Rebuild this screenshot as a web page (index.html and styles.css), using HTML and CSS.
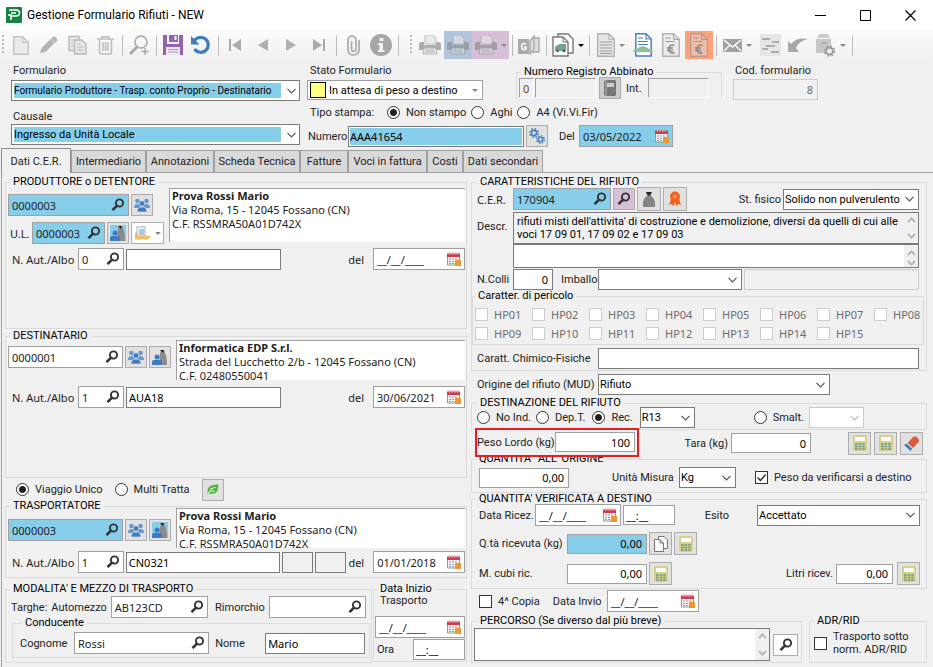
FILE: index.html
```html
<!DOCTYPE html>
<html lang="it">
<head>
  <meta charset="UTF-8">
  <meta name="viewport" content="width=device-width, initial-scale=1.0">
  <title>Gestione Formulario Rifiuti - NEW</title>
  <link rel="stylesheet" href="styles.css">
</head>
<body>
  <svg class="sprite" aria-hidden="true">
    <symbol id="lens" viewBox="0 0 14 14"><circle cx="8.5" cy="5" r="3.6" fill="none" stroke="#333" stroke-width="1.9"/><path d="M5.8 7.8L1.5 12.2" stroke="#333" stroke-width="2.6"/></symbol>
    <symbol id="calendar" viewBox="0 0 14 14"><path d="M.5 3h12v10H.5z" fill="#f4f4f4" stroke="#999"/><path d="M0 1.5h13V5H0z" fill="#d03a4c"/><path d="M2.5 0v3M5.2 0v3M7.9 0v3M10.6 0v3" stroke="#e9a3ab"/><path d="M2 7h9M2 9.5h9M2 11.5h9" stroke="#999" stroke-dasharray="2 1"/><path d="M8 8h6v6H8z" fill="#f39530"/></symbol>
    <symbol id="people" viewBox="0 0 16 14"><g fill="#6a97cd"><circle cx="3.5" cy="3" r="2.3"/><circle cx="12.5" cy="3" r="2.3"/><path d="M0 10q0-4 3.5-4T7 10zM9 10q0-4 3.5-4T16 10z"/></g><g fill="#3f7bc0" stroke="#e1e1e1" stroke-width=".7"><circle cx="8" cy="5.5" r="2.8"/><path d="M3 14q0-5 5-5t5 5z"/></g></symbol>
    <symbol id="binman" viewBox="0 0 16 16"><path d="M8 16q-1-8 0-11l1-4h3l1 3q2 3 2 12z" fill="#8b8b8b"/><path d="M8 1l3 3 1-3z" fill="#222"/><circle cx="5" cy="8" r="2.5" fill="#3f7bc0"/><path d="M0 16v-3q0-2 2-2h6q2 0 2 2v3z" fill="#3f7bc0"/></symbol>
    <symbol id="bag" viewBox="0 0 14 16"><path d="M1 16Q0 8 5 5L4 1h6L9 5q5 3 4 11z" fill="#858585"/><path d="M4 1h6L8 3.5 7 5 5.5 3.5z" fill="#222"/></symbol>
    <symbol id="rosette" viewBox="0 0 12 16"><path d="M2 8L0 14l3-1 1.5 2.5L6 11l1.5 4.5L9 13l3 1-2-6z" fill="#e8622a"/><circle cx="6" cy="5.5" r="5" fill="#f0641e"/><circle cx="6" cy="5.5" r="2" fill="#f58a55"/></symbol>
    <symbol id="folder" viewBox="0 0 16 14"><path d="M2 1h8v9H2z" fill="#fff" stroke="#8fb0d6"/><path d="M4 3h5v6H4z" fill="#a9c6e6"/><path d="M0 13V7h3v3h13l-3 3.5H0z" fill="#f0bf62"/></symbol>
    <symbol id="calc" viewBox="0 0 14 16"><rect width="14" height="16" rx="2" fill="#d8d08a"/><path d="M2 2h10v4H2z" fill="#fff"/><path d="M2 9h10M2 11.5h10M2 14h10" stroke="#5f9b8c" stroke-width="1.6" stroke-dasharray="2.6 1"/></symbol>
    <symbol id="eraser" viewBox="0 0 16 16"><path d="M9.5 1.5h3l2.5 3v2L9 13 3.5 8z" fill="#d9603f"/><path d="M3 8.5l5.5 5-2 2.5L0 10z" fill="#3f7bc0"/><path d="M3 8.5l5.5 5" stroke="#eee"/></symbol>
    <symbol id="leaf" viewBox="0 0 14 12"><path d="M1 12Q-1 3 6 1l7-1q1 11-7 11H3z" fill="#4fb53c"/><path d="M1 12Q4 5 10 3M5 7V4M5 8h4" fill="none" stroke="#e8f7e0" stroke-width="1.2"/></symbol>
    <symbol id="gears" viewBox="0 0 16 16"><g fill="none" stroke="#4a82bd"><circle cx="5" cy="5" r="2.6" stroke-width="1.6"/><circle cx="5" cy="5" r="4.2" stroke-width="1.6" stroke-dasharray="1.7 1.6"/><circle cx="11.5" cy="11.5" r="2.2" stroke-width="1.5"/><circle cx="11.5" cy="11.5" r="3.7" stroke-width="1.5" stroke-dasharray="1.5 1.4"/></g></symbol>
    <symbol id="sheets" viewBox="0 0 14 16"><path d="M4.5.5H10L13.5 4v8.5h-9z" fill="#f8f8f8" stroke="#777"/><path d="M.5 3.5H6L9.5 7v8.5h-9z" fill="#f8f8f8" stroke="#777"/><path d="M6 3.5V7h3.5" fill="none" stroke="#777"/></symbol>
    <symbol id="register" viewBox="0 0 14 16"><rect x="1" width="12" height="16" rx="1.5" fill="#777"/><path d="M4 3h7v4H4z" fill="#ccc"/><path d="M3 0v16" stroke="#bbb"/></symbol>
    <symbol id="printer" viewBox="0 0 22 20"><path d="M6 0h8l3 3v6H6z" fill="#e3e3e3" stroke="#aaa"/><path d="M0 9q0-2 2-2h3v3h12V7h3q2 0 2 2v6H0z" fill="#909090"/><path d="M5 13h12l1 6H4z" fill="#e6e6e6" stroke="#999"/><path d="M6 15h9M6 17h10" stroke="#999"/></symbol>
    <symbol id="euro" viewBox="0 0 18 24"><path d="M.7.7h11l5.6 5.6v17H.7z" fill="#ddd" fill-opacity=".45" stroke="#999" stroke-opacity=".7" stroke-width="1.4"/><path d="M11.7.7v5.6h5.6M3.5 5h5M3.5 8.5h9" fill="none" stroke="#999"/><path d="M12.5 12.5q-5-2-5.5 3.5.5 5.5 5.5 3.5M5 15h6M5 17.5h6" fill="none" stroke="#888" stroke-width="1.4"/></symbol>
  </svg>

  <header class="titlebar">
    <svg width="16" height="16" viewBox="0 0 16 16"><rect width="16" height="16" rx="1" fill="#168344"/><path d="M4 4V3h6q3.5 0 3.5 3T10 9H5v4M2 8h3v5M5 6h5" fill="none" stroke="#fff" stroke-width="1.5"/></svg>
    <h1>Gestione Formulario Rifiuti - NEW</h1>
    <button class="win" aria-label="Riduci"><svg width="11" height="11"><path d="M0 5.5h11" stroke="#000"/></svg></button>
    <button class="win" aria-label="Ingrandisci"><svg width="11" height="11"><path d="M.5.5h10v10H.5z" fill="none" stroke="#000"/></svg></button>
    <button class="win" aria-label="Chiudi"><svg width="11" height="11"><path d="M.5.5l10 10M10.5.5l-10 10" stroke="#000" stroke-width="1.2"/></svg></button>
  </header>

  <nav class="toolbar" aria-label="Comandi">
    <i class="grip"></i>
    <button class="tool" aria-label="Nuovo"><svg width="16" height="19"><path d="M.7.7h9l5.6 5.6v12H.7z" fill="#e9e9e9" stroke="#c4c4c4" stroke-width="1.4"/><path d="M9.7.7v5.6h5.6" fill="none" stroke="#c4c4c4"/></svg></button>
    <button class="tool" aria-label="Modifica"><svg width="18" height="18"><path d="M0 17l1.5-5L11 2.5l4 4L5.5 16zM12 1.5Q14-.5 16 1.5t1 3.5l-1.5 1.5-4-4z" fill="#b4b4b4"/></svg></button>
    <button class="tool" aria-label="Copia"><svg width="19" height="20"><path d="M1 1.5h10v14H1z" fill="#e8e8e8" stroke="#bbb" stroke-width="1.5"/><path d="M6.5 5h7L18 9v10H6.5z" fill="#e8e8e8" stroke="#bbb" stroke-width="1.5"/><path d="M3 5h3M3 8h2M3 11h2M9 9h4M9 12h7M9 15h7" stroke="#bbb"/></svg></button>
    <button class="tool" aria-label="Elimina"><svg width="17" height="19"><path d="M0 3h17M5 3V.7h7V3M2.5 4v12q0 2 2 2h8q2 0 2-2V4M6 6v9M8.5 6v9M11 6v9" fill="none" stroke="#bcbcbc" stroke-width="1.5"/></svg></button>
    <i class="sep"></i>
    <button class="tool" aria-label="Cerca"><svg width="20" height="21"><circle cx="12" cy="7" r="6" fill="none" stroke="#a8a8a8" stroke-width="1.5"/><path d="M8 12l-7 7" stroke="#a8a8a8" stroke-width="3"/><path d="M16 13v7M12.5 16.5h7" stroke="#a8a8a8" stroke-width="1.4"/></svg></button>
    <i class="sep"></i>
    <button class="tool" aria-label="Salva"><svg width="20" height="20"><path d="M0 0h4v9h12V0h4v20H0z" fill="#9263af"/><path d="M6 0h9v7H6z" fill="#9263af"/><path d="M11.5 1h2v4h-2z" fill="#fff"/><path d="M3 12h14v8H3z" fill="#eee4f2"/><path d="M5 14.5h10M5 17h10" stroke="#aaa"/></svg></button>
    <button class="tool" aria-label="Aggiorna"><svg width="20" height="20"><path d="M3 6.5A7.5 7.5 0 1 1 3.5 14" fill="none" stroke="#3f7dbb" stroke-width="3.2"/><path d="M0 1v8.5h8.5z" fill="#3f7dbb"/></svg></button>
    <i class="sep"></i>
    <button class="tool" aria-label="Primo"><svg width="12" height="12"><path d="M12 0v12L3 6zM0 0h2v12H0z" fill="#aaa"/></svg></button>
    <button class="tool" aria-label="Precedente"><svg width="10" height="12"><path d="M10 0v12L0 6z" fill="#b0b0b0"/></svg></button>
    <button class="tool" aria-label="Successivo"><svg width="10" height="12"><path d="M0 0v12l10-6z" fill="#b0b0b0"/></svg></button>
    <button class="tool" aria-label="Ultimo"><svg width="12" height="12"><path d="M0 0v12l9-6zM10 0h2v12h-2z" fill="#aaa"/></svg></button>
    <i class="sep"></i>
    <button class="tool" aria-label="Allegati"><svg width="13" height="21"><path d="M12 5v10q-.5 5-5.5 5T1 15V5q.3-4 4-4t4 4v9q-.2 2.5-2.2 2.5T4.6 14V6" fill="none" stroke="#aaa" stroke-width="1.7"/></svg></button>
    <button class="tool" aria-label="Informazioni"><svg width="22" height="22"><circle cx="11" cy="11" r="11" fill="#a6a6a6"/><path d="M9.5 4h4v3h-4zM8 9h5v7h1.5v2H8v-2h1.5v-5H8z" fill="#f4f4f4"/></svg></button>
    <i class="sep"></i>
    <i class="grip second"></i>
    <button class="tool" aria-label="Stampa"><svg class="faded" width="22" height="20"><use href="#printer"/></svg></button>
    <button class="tool blue-cell" aria-label="Stampa copia"><svg class="faded" width="22" height="20"><use href="#printer"/></svg></button>
    <button class="tool drop pink-cell" aria-label="Altre stampe"><svg class="faded" width="22" height="20"><use href="#printer"/></svg><b class="arrow"></b></button>
    <i class="sep"></i>
    <button class="tool" aria-label="Registro"><svg width="22" height="20"><path d="M0 4h11v15H0z" fill="#aaa"/><path d="M8 9q-4-2-4.5 2.5Q4 16 8 14v-2H6" fill="none" stroke="#fff" stroke-width="1.5"/><path d="M12 6l4-5v13l-4 5zM16 3h5v14h-8" fill="#ddd" stroke="#aaa" stroke-width="1.4"/></svg></button>
    <i class="sep"></i>
    <button class="tool drop" aria-label="Documenti"><svg width="22" height="24"><path d="M6 1h10l5 5v14H6z" fill="#fff" stroke="#777" stroke-width="1.4"/><path d="M1 4h10l5 5v14H1z" fill="#fff" stroke="#777" stroke-width="1.4"/><path d="M11 4v5h5" fill="none" stroke="#777"/><path d="M3 14l2-2h2v-1h7v7H3z" fill="#6fa58a"/><circle cx="5.5" cy="18" r="1.3" fill="#456"/><circle cx="12" cy="18" r="1.3" fill="#456"/></svg><b class="arrow dark"></b></button>
    <i class="sep"></i>
    <button class="tool drop" aria-label="Elenco"><svg width="18" height="24"><path d="M.7.7h11l5.6 5.6v17H.7z" fill="#e6e6e6" stroke="#b0b0b0" stroke-width="1.4"/><path d="M11.7.7v5.6h5.6" fill="none" stroke="#b0b0b0"/><path d="M3 9h12M3 12h12M3 15h12M3 18h12M3 20.5h12" stroke="#999"/></svg><b class="arrow"></b></button>
    <button class="tool" aria-label="Documento veicolo"><svg width="20" height="24"><path d="M2.8.8H13l5.2 5.2v17H2.8z" fill="#fafafa" stroke="#4a82bd" stroke-width="1.5"/><path d="M13 .8V6h5.2M5 5h5M5 8.5h10M5 11.5h10" fill="none" stroke="#4a82bd" stroke-width="1.2"/><path d="M0 18q1-2 4-2 4-4 9-2l3 2q4 0 4 3H1z" fill="#8fbf95"/></svg></button>
    <button class="tool" aria-label="Fattura"><svg width="18" height="24"><use href="#euro"/></svg></button>
    <button class="tool orange-cell" aria-label="Annulla fattura"><svg width="18" height="24"><use href="#euro"/></svg></button>
    <i class="sep"></i>
    <button class="tool drop" aria-label="Posta"><svg width="19" height="13"><path d="M0 0h19v13H0z" fill="#a0a0a0"/><path d="M1 1l8.5 7L18 1M1 12l6-6M18 12l-6-6" fill="none" stroke="#fff" stroke-width="1.4"/></svg><b class="arrow"></b></button>
    <button class="tool" aria-label="Dettaglio"><svg width="22" height="22"><path d="M1 0h21v22H1z" fill="#e6e6e6"/><path d="M3 5h8M13 8h7M7 12h9M3 15h6M12 18h8" stroke="#999" stroke-width="1.3"/></svg></button>
    <button class="tool" aria-label="Indietro"><svg width="20" height="14"><path d="M0 14V3l3 3Q9-1 20 1 11 3 8 10l3 4z" fill="#a8a8a8"/></svg></button>
    <button class="tool drop" aria-label="Impostazioni"><svg width="20" height="23"><path d="M3 0h9l2 4H1z" fill="#ccc"/><path d="M0 5h15v14H0z" fill="#c6c6c6"/><path d="M5 9h6" stroke="#999"/><circle cx="13.5" cy="17" r="3.4" fill="#eee" stroke="#999" stroke-width="1.8"/><circle cx="13.5" cy="17" r="5" fill="none" stroke="#999" stroke-width="1.5" stroke-dasharray="2 1.9"/></svg><b class="arrow"></b></button>
    <i class="sep"></i>
  </nav>

  <section class="head">
    <div class="kind">
      <label for="formulario">Formulario</label>
      <select id="formulario" class="hot long-text"><option>Formulario Produttore - Trasp. conto Proprio - Destinatario</option></select>
      <label for="causale" class="second-label">Causale</label>
      <select id="causale" class="hot"><option>Ingresso da Unità Locale</option></select>
    </div>
    <div class="status">
      <div class="row">
        <div class="state">
          <label for="stato">Stato Formulario</label>
          <div class="state-box"><i class="swatch"></i><select id="stato"><option>In attesa di peso a destino</option></select></div>
        </div>
        <fieldset class="register">
          <legend>Numero Registro Abbinato</legend>
          <div class="row">
            <input class="sunk zero" value="0" aria-label="Numero registro" readonly>
            <input class="sunk reg" aria-label="Registro abbinato" disabled>
            <button class="btn gray" aria-label="Apri registro"><svg width="14" height="16"><use href="#register"/></svg></button>
            <label for="int">Int.</label>
            <input id="int" class="sunk int" disabled>
          </div>
        </fieldset>
        <div class="code">
          <label for="cod">Cod. formulario</label>
          <input id="cod" class="box num" value="8" disabled>
        </div>
      </div>
      <div class="row print-kind">
        <span class="caption">Tipo stampa:</span>
        <label class="pick"><input type="radio" name="stampa" checked>Non stampo</label>
        <label class="pick"><input type="radio" name="stampa">Aghi</label>
        <label class="pick"><input type="radio" name="stampa">A4 (Vi.Vi.Fir)</label>
      </div>
      <div class="row number-row">
        <label for="numero">Numero</label>
        <input id="numero" class="box hot-box" value="AAA41654">
        <button class="btn" aria-label="Genera numero"><svg width="16" height="16"><use href="#gears"/></svg></button>
        <label for="data" class="of">Del</label>
        <span class="field date blue"><input id="data" value="03/05/2022"><button aria-label="Calendario"><svg width="14" height="14"><use href="#calendar"/></svg></button></span>
      </div>
    </div>
  </section>

  <div class="tabs" role="tablist">
    <button role="tab" class="tab active" aria-selected="true">Dati C.E.R.</button>
    <button role="tab" class="tab t2">Intermediario</button>
    <button role="tab" class="tab t3">Annotazioni</button>
    <button role="tab" class="tab t4">Scheda Tecnica</button>
    <button role="tab" class="tab t5">Fatture</button>
    <button role="tab" class="tab t6">Voci in fattura</button>
    <button role="tab" class="tab t7">Costi</button>
    <button role="tab" class="tab t8">Dati secondari</button>
  </div>

  <main class="panel">
    <div class="left">
      <fieldset class="party producer">
        <legend>PRODUTTORE o DETENTORE</legend>
        <div class="top">
          <div class="keys">
            <div class="row">
              <span class="field blue code-wide"><input value="0000003" aria-label="Produttore"><button aria-label="Cerca produttore"><svg width="14" height="14"><use href="#lens"/></svg></button></span>
              <button class="btn" aria-label="Anagrafica"><svg width="16" height="14"><use href="#people"/></svg></button>
            </div>
            <div class="row unit">
              <label for="ul" class="wide">U.L.</label>
              <span class="field blue code-short"><input id="ul" value="0000003"><button aria-label="Cerca unità"><svg width="14" height="14"><use href="#lens"/></svg></button></span>
              <button class="btn" aria-label="Trasportatori"><svg class="sky" width="16" height="16"><use href="#binman"/></svg></button>
              <button class="btn white" aria-label="Apri cartella"><svg width="16" height="14"><use href="#folder"/></svg><b class="arrow"></b></button>
            </div>
          </div>
          <div class="info"><strong>Prova Rossi Mario</strong><br>Via Roma, 15 - 12045 Fossano (CN)<br>C.F. RSSMRA50A01D742X</div>
        </div>
        <div class="row permit">
          <label for="aut1" class="wide">N. Aut./Albo</label>
          <span class="field seq"><input id="aut1" value="0"><button aria-label="Cerca autorizzazione"><svg width="14" height="14"><use href="#lens"/></svg></button></span>
          <input class="box albo" aria-label="Autorizzazione">
          <label for="del1" class="wide del">del</label>
          <span class="field date"><input id="del1" value="__/__/____"><button aria-label="Calendario"><svg width="14" height="14"><use href="#calendar"/></svg></button></span>
        </div>
      </fieldset>

      <fieldset class="party receiver">
        <legend>DESTINATARIO</legend>
        <div class="top">
          <div class="keys">
            <div class="row">
              <span class="field code-mid"><input value="0000001" aria-label="Destinatario"><button aria-label="Cerca destinatario"><svg width="14" height="14"><use href="#lens"/></svg></button></span>
              <button class="btn" aria-label="Anagrafica"><svg width="16" height="14"><use href="#people"/></svg></button>
              <button class="btn" aria-label="Trasportatori"><svg width="16" height="16"><use href="#binman"/></svg></button>
            </div>
          </div>
          <div class="info"><strong>Informatica EDP S.r.l.</strong><br>Strada del Lucchetto 2/b - 12045 Fossano (CN)<br>C.F. 02480550041</div>
        </div>
        <div class="row permit">
          <label for="aut2" class="wide">N. Aut./Albo</label>
          <span class="field seq"><input id="aut2" value="1"><button aria-label="Cerca autorizzazione"><svg width="14" height="14"><use href="#lens"/></svg></button></span>
          <input class="box albo" value="AUA18" aria-label="Autorizzazione">
          <label for="del2" class="wide del">del</label>
          <span class="field date"><input id="del2" value="30/06/2021"><button aria-label="Calendario"><svg width="14" height="14"><use href="#calendar"/></svg></button></span>
        </div>
      </fieldset>

      <div class="row trip">
        <label class="pick"><input type="radio" name="viaggio" checked>Viaggio Unico</label>
        <label class="pick"><input type="radio" name="viaggio">Multi Tratta</label>
        <button class="btn" aria-label="Ambiente"><svg width="12" height="11"><use href="#leaf"/></svg></button>
      </div>

      <fieldset class="party carrier">
        <legend>TRASPORTATORE</legend>
        <div class="top">
          <div class="keys">
            <div class="row">
              <span class="field blue code-mid"><input value="0000003" aria-label="Trasportatore"><button aria-label="Cerca trasportatore"><svg width="14" height="14"><use href="#lens"/></svg></button></span>
              <button class="btn" aria-label="Anagrafica"><svg width="16" height="14"><use href="#people"/></svg></button>
              <button class="btn" aria-label="Trasportatori"><svg class="sky" width="16" height="16"><use href="#binman"/></svg></button>
            </div>
          </div>
          <div class="info"><strong>Prova Rossi Mario</strong><br>Via Roma, 15 - 12045 Fossano (CN)<br>C.F. RSSMRA50A01D742X</div>
        </div>
        <div class="row permit">
          <label for="aut3" class="wide">N. Aut./Albo</label>
          <span class="field seq"><input id="aut3" value="1"><button aria-label="Cerca autorizzazione"><svg width="14" height="14"><use href="#lens"/></svg></button></span>
          <input class="box albo" value="CN0321" aria-label="Autorizzazione">
          <input class="box tiny" aria-label="Categoria" readonly>
          <input class="box tiny" aria-label="Classe" readonly>
          <label for="del3" class="wide del">del</label>
          <span class="field date"><input id="del3" value="01/01/2018"><button aria-label="Calendario"><svg width="14" height="14"><use href="#calendar"/></svg></button></span>
        </div>
      </fieldset>

      <div class="vehicle">
        <fieldset class="mode">
          <legend>MODALITA' E MEZZO DI TRASPORTO</legend>
          <div class="row plates">
            <span>Targhe:</span>
            <label for="automezzo">Automezzo</label>
            <span class="field plate"><input id="automezzo" value="AB123CD"><button aria-label="Cerca automezzo"><svg width="14" height="14"><use href="#lens"/></svg></button></span>
            <label for="rimorchio" class="trailer">Rimorchio</label>
            <span class="field plate"><input id="rimorchio"><button aria-label="Cerca rimorchio"><svg width="14" height="14"><use href="#lens"/></svg></button></span>
          </div>
          <fieldset class="driver">
            <legend>Conducente</legend>
            <div class="row">
              <label for="cognome">Cognome</label>
              <span class="field surname"><input id="cognome" value="Rossi"><button aria-label="Cerca conducente"><svg width="14" height="14"><use href="#lens"/></svg></button></span>
              <label for="nome" class="second-name">Nome</label>
              <input id="nome" class="box name" value="Mario">
            </div>
          </fieldset>
        </fieldset>
        <fieldset class="start">
          <legend>Data Inizio</legend>
          <label for="inizio">Trasporto</label>
          <span class="field date"><input id="inizio" value="__/__/____"><button aria-label="Calendario"><svg width="14" height="14"><use href="#calendar"/></svg></button></span>
          <div class="row"><label for="ora">Ora</label><input id="ora" class="box light hour" value="__:__"></div>
        </fieldset>
      </div>
    </div>

    <div class="right">
      <fieldset class="waste">
        <legend>CARATTERISTICHE DEL RIFIUTO</legend>
        <div class="row cer">
          <label for="cer" class="wide lead">C.E.R.</label>
          <span class="field blue cer-code"><input id="cer" value="170904"><button aria-label="Cerca CER"><svg width="14" height="14"><use href="#lens"/></svg></button></span>
          <button class="btn pink" aria-label="Cerca"><svg width="14" height="14"><use href="#lens"/></svg></button>
          <button class="btn tall" aria-label="Rifiuto"><svg width="14" height="16"><use href="#bag"/></svg></button>
          <button class="btn tall" aria-label="Certificato"><svg width="12" height="16"><use href="#rosette"/></svg></button>
          <label for="fisico" class="push">St. fisico</label>
          <select id="fisico" class="physical"><option>Solido non pulverulento</option></select>
        </div>
        <div class="row descr">
          <label for="descr" class="lead">Descr.</label>
          <div class="memos">
            <div class="memo"><textarea id="descr" readonly>rifiuti misti dell'attivita' di costruzione e demolizione, diversi da quelli di cui alle voci 17 09 01, 17 09 02 e 17 09 03</textarea><span class="bar"></span></div>
            <div class="memo low"><textarea aria-label="Note"></textarea><span class="bar"></span></div>
          </div>
        </div>
        <div class="row packs">
          <label for="colli" class="lead">N.Colli</label>
          <input id="colli" class="box num count" value="0">
          <label for="imballo">Imballo</label>
          <select id="imballo" class="pack"><option></option></select>
          <input class="box grow" aria-label="Descrizione imballo" disabled>
        </div>
        <fieldset class="hazard" disabled>
          <legend>Caratter. di pericolo</legend>
          <div class="hp wide">
            <label><input type="checkbox">HP01</label><label><input type="checkbox">HP02</label><label><input type="checkbox">HP03</label><label><input type="checkbox">HP04</label><label><input type="checkbox">HP05</label><label><input type="checkbox">HP06</label><label><input type="checkbox">HP07</label><label><input type="checkbox">HP08</label>
            <label><input type="checkbox">HP09</label><label><input type="checkbox">HP10</label><label><input type="checkbox">HP11</label><label><input type="checkbox">HP12</label><label><input type="checkbox">HP13</label><label><input type="checkbox">HP14</label><label><input type="checkbox">HP15</label>
          </div>
        </fieldset>
        <div class="row chem">
          <label for="chimico" class="long">Caratt. Chimico-Fisiche</label>
          <input id="chimico" class="box grow">
        </div>
      </fieldset>

      <div class="row origin">
        <label for="origine" class="long">Origine del rifiuto (MUD)</label>
        <select id="origine"><option>Rifiuto</option></select>
      </div>

      <fieldset class="dest">
        <legend>DESTINAZIONE DEL RIFIUTO</legend>
        <div class="row">
          <label class="pick"><input type="radio" name="dest">No Ind.</label>
          <label class="pick"><input type="radio" name="dest">Dep.T.</label>
          <label class="pick rec"><input type="radio" name="dest" checked>Rec.</label>
          <select class="small" aria-label="Recupero"><option>R13</option></select>
          <label class="pick push"><input type="radio" name="dest">Smalt.</label>
          <select class="small" aria-label="Smaltimento" disabled><option></option></select>
        </div>
      </fieldset>

      <div class="row weight">
        <div class="row marked">
          <label for="lordo">Peso Lordo (kg)</label>
          <input id="lordo" class="box light num kg" value="100">
        </div>
        <label for="tara" class="push">Tara (kg)</label>
        <input id="tara" class="box light num kg" value="0">
        <button class="btn first" aria-label="Calcola lordo"><svg width="14" height="16"><use href="#calc"/></svg></button>
        <button class="btn" aria-label="Calcola tara"><svg width="14" height="16"><use href="#calc"/></svg></button>
        <button class="btn" aria-label="Azzera"><svg width="16" height="16"><use href="#eraser"/></svg></button>
      </div>

      <fieldset class="qty">
        <legend>QUANTITA'&nbsp; ALL' ORIGINE</legend>
        <div class="row">
          <input class="box light num amount" value="0,00" aria-label="Quantità all'origine">
          <label for="um" class="unit-label">Unità Misura</label>
          <select id="um"><option>Kg</option></select>
          <label class="pick"><input type="checkbox" checked>Peso da verificarsi a destino</label>
        </div>
      </fieldset>

      <fieldset class="verified">
        <legend>QUANTITA' VERIFICATA A DESTINO</legend>
        <div class="row arrival">
          <label for="ricez">Data Ricez.</label>
          <span class="field date short"><input id="ricez" value="__/__/____"><button aria-label="Calendario"><svg width="14" height="14"><use href="#calendar"/></svg></button></span>
          <input class="box light hour" value="__:__" aria-label="Ora ricezione">
          <label for="esito" class="push">Esito</label>
          <select id="esito"><option>Accettato</option></select>
        </div>
        <div class="row">
          <label for="qta" class="name-col">Q.tà ricevuta (kg)</label>
          <input id="qta" class="box light num kg blue" value="0,00">
          <button class="btn" aria-label="Copia quantità"><svg width="14" height="16"><use href="#sheets"/></svg></button>
          <button class="btn" aria-label="Calcola"><svg width="14" height="16"><use href="#calc"/></svg></button>
        </div>
        <div class="row cubic">
          <label for="cubi" class="name-col">M. cubi ric.</label>
          <input id="cubi" class="box light num kg" value="0,00">
          <button class="btn" aria-label="Calcola"><svg width="14" height="16"><use href="#calc"/></svg></button>
          <label for="litri" class="push">Litri ricev.</label>
          <input id="litri" class="box light num litres" value="0,00">
          <button class="btn" aria-label="Calcola"><svg width="14" height="16"><use href="#calc"/></svg></button>
        </div>
      </fieldset>

      <div class="row copy">
        <label class="pick"><input type="checkbox">4^ Copia</label>
        <label for="invio">Data Invio</label>
        <span class="field date"><input id="invio" value="__/__/____"><button aria-label="Calendario"><svg width="14" height="14"><use href="#calendar"/></svg></button></span>
      </div>

      <div class="bottom">
        <fieldset class="route">
          <legend>PERCORSO (Se diverso dal più breve)</legend>
          <div class="row">
            <div class="memo"><textarea aria-label="Percorso"></textarea><span class="bar"></span></div>
            <button class="btn white" aria-label="Cerca percorso"><svg width="14" height="14"><use href="#lens"/></svg></button>
          </div>
        </fieldset>
        <fieldset class="adr">
          <legend>ADR/RID</legend>
          <label class="pick"><input type="checkbox"><span>Trasporto sotto<br>norm. ADR/RID</span></label>
        </fieldset>
      </div>
    </div>
  </main>
</body>
</html>
```
FILE: styles.css
```css
:root {
  --face: #f0f0f0;
  --line: #dcdcdc;
  --edge: #7a7a7a;
  --soft: #a0a0a0;
  --sky: #87ceeb;
  --tight: Roboto, sans-serif;
  --open: "Noto Sans", sans-serif;
  --chevron: url("data:image/svg+xml,%3Csvg xmlns='http://www.w3.org/2000/svg' width='9' height='6'%3E%3Cpath d='M.5 .8l4 4 4-4' fill='none' stroke='%23555' stroke-width='1.2'/%3E%3C/svg%3E");
}

* {
  box-sizing: border-box;
}

body {
  margin: 0;
  background: var(--face);
  color: #222;
  font: 11px/13px var(--tight);
}

button,
input,
select,
textarea {
  margin: 0;
  padding: 0;
  border: 0;
  border-radius: 0;
  color: inherit;
  font: inherit;
  min-width: 0;
  outline: 0;
}

input,
.wide {
  font: 11px/13px var(--open);
}

label,
legend,
.caption {
  white-space: nowrap;
}

svg {
  display: block;
  flex: none;
}

.sprite {
  width: 0;
  height: 0;
  position: absolute;
}

.row {
  display: flex;
  align-items: center;
}

.push {
  margin-left: auto;
}

.grow {
  flex: 1;
}

/* title bar */
.titlebar {
  display: flex;
  align-items: center;
  height: 30px;
  padding-left: 6px;
  background: #fff;
}

.titlebar h1 {
  flex: 1;
  margin: 0 0 0 5px;
  color: #000;
  font: 12px/16px var(--tight);
}

.win {
  display: flex;
  justify-content: center;
  width: 45px;
  background: none;
}

/* toolbar */
.toolbar {
  display: flex;
  align-items: center;
  height: 30px;
  padding-left: 2px;
  background: linear-gradient(#fcfcfc, #f0f0f0);
}

.tool {
  display: flex;
  align-items: center;
  justify-content: center;
  width: 28px;
  height: 28px;
  background: none;
}

.drop {
  width: 37px;
  gap: 4px;
}

.faded {
  opacity: .7;
}

.blue-cell {
  background: #b0c4de;
}

.pink-cell {
  background: #d8bfd8;
}

.orange-cell {
  background: #ffa07a;
}

.arrow {
  border: 3px solid transparent;
  border-top-color: #888;
  border-bottom: 0;
}

.arrow.dark {
  border-top-color: #000;
}

.sep {
  width: 6px;
  height: 21px;
  background: linear-gradient(#bdbdbd, #bdbdbd) 3px 0 / 1px 100% no-repeat;
}

.grip {
  width: 2px;
  height: 20px;
  margin-right: 3px;
  background: repeating-linear-gradient(#bbb 0 2px, transparent 2px 4px);
}

.grip.second {
  margin: 0 4px 0 9px;
}

/* controls */
.box {
  height: 21px;
  padding: 0 4px 0 2px;
  border: 1px solid var(--edge);
  background: #fff;
  color: #000;
}

.box.light {
  border-color: var(--soft);
}

.box:disabled {
  border-color: #ccc;
  background: var(--face);
  color: #6d6d6d;
}

.num {
  text-align: right;
}

.field {
  display: flex;
  align-items: center;
  height: 22px;
  padding: 0 3px;
  border: 1px solid var(--soft);
  background: #fff;
}

.field input {
  flex: 1;
  width: 0;
  background: none;
}

.field button {
  background: none;
}

.blue,
.box.blue {
  background: var(--sky);
}

.date {
  width: 92px;
}

.btn {
  display: flex;
  flex: none;
  align-items: center;
  justify-content: center;
  width: 22px;
  height: 22px;
  border: 1px solid #adadad;
  background: #e1e1e1;
}

.btn.white {
  background: #fff;
}

.btn.gray {
  background: #ccc;
}

.btn.pink {
  background: #d8bfd8;
}

.sky {
  background: var(--sky);
}

select {
  appearance: none;
  height: 21px;
  padding: 0 15px 0 1px;
  border: 1px solid var(--edge);
  background: var(--chevron) right 4px center no-repeat #fff;
  color: #000;
}

select:disabled {
  border-color: #ccc;
  background-image: url("data:image/svg+xml,%3Csvg xmlns='http://www.w3.org/2000/svg' width='9' height='6'%3E%3Cpath d='M.5 .8l4 4 4-4' fill='none' stroke='%23bbb' stroke-width='1.2'/%3E%3C/svg%3E");
  opacity: 1;
}

select.hot {
  padding: 2px 18px 2px 2px;
  background: var(--chevron) right 4px center no-repeat border-box,
    linear-gradient(var(--sky), var(--sky)) content-box,
    #fff;
}

select.long-text {
  font-size: 10px;
}

input[type="radio"],
input[type="checkbox"] {
  appearance: none;
  flex: none;
  width: 13px;
  height: 13px;
  border: 1px solid #333;
  background: #fff;
}

input[type="radio"] {
  border-radius: 50%;
}

input[type="radio"]:checked {
  background: radial-gradient(#222 0 3px, #fff 4px);
}

input[type="checkbox"]:checked {
  background: url("data:image/svg+xml,%3Csvg xmlns='http://www.w3.org/2000/svg' width='11' height='11'%3E%3Cpath d='M1.5 5.5l3 3 5-6' fill='none' stroke='%23222' stroke-width='1.3'/%3E%3C/svg%3E") #fff;
}

.pick {
  display: flex;
  align-items: center;
  gap: 6px;
}

fieldset {
  min-width: 0;
  margin: 0;
  padding: 0 1px 0 2px;
  border: 1px solid var(--line);
}

legend {
  height: 10px;
  margin-left: 2px;
  padding: 0 3px;
  color: #000;
  line-height: 10px;
}

/* header */
.head {
  display: flex;
  gap: 7px;
  padding: 4px 12px 0 11px;
}

.kind {
  display: flex;
  flex-direction: column;
  width: 289px;
}

.kind label,
.state label,
.code label {
  display: block;
  height: 16px;
  padding-left: 2px;
}

.kind .second-label {
  margin-top: 9px;
  height: 14px;
}

.state {
  width: 176px;
}

.state label {
  padding-left: 3px;
}

.state-box {
  display: flex;
  align-items: center;
  height: 20px;
  border: 1px solid var(--soft);
  background: #fff;
}

.swatch {
  flex: none;
  width: 16px;
  height: 16px;
  margin: 0 3px 0 2px;
  border: 1px solid #000;
  background: #ffff80;
}

.state-box select {
  flex: 1;
  height: 18px;
  padding: 0;
  border: 0;
  background: none;
}

.state-box::after {
  content: "";
  margin-right: 4px;
  border: 3px solid transparent;
  border-top-color: #888;
  border-bottom: 0;
}

.status .row:first-child {
  align-items: flex-start;
}

.register {
  width: 206px;
  margin: 3px 11px 0 33px;
  border-bottom: 0;
}

.register .row:first-child {
  align-items: center;
}

.register label {
  margin: 0 6px 0 5px;
}

.sunk {
  height: 20px;
  padding: 0 3px;
  border: 1px solid var(--soft);
  border-right-color: #fff;
  border-bottom-color: #fff;
  background: var(--face);
  color: #7a3b00;
}

.zero {
  width: 15px;
  margin-right: 1px;
}

.reg {
  width: 61px;
  margin-right: 3px;
}

.int {
  width: 61px;
}

.code label {
  height: 15px;
}

.code .box {
  width: 85px;
}

.print-kind {
  height: 25px;
  padding-left: 3px;
}

.print-kind .caption {
  width: 77px;
}

.print-kind .pick {
  margin-right: 5px;
}

.number-row label {
  width: 40px;
  margin-left: 1px;
}

.number-row .hot-box {
  width: 176px;
  margin-right: 2px;
  padding: 1px;
  background: linear-gradient(var(--sky), var(--sky)) content-box, #fff;
}

.number-row .of {
  width: 20px;
  margin-left: 11px;
}

.number-row .date {
  width: 94px;
}

/* tabs */
.tabs {
  display: flex;
  align-items: flex-end;
  height: 24px;
  margin-top: 1px;
  padding-left: 1px;
}

.tab {
  height: 22px;
  border: 1px solid var(--soft);
  border-bottom: 0;
  background: #d9d9d9;
  white-space: nowrap;
}

.tab.active {
  width: 70px;
  height: 25px;
  margin-bottom: -1px;
  background: var(--face);
  border-color: #8c8c8c;
  z-index: 1;
}

.t2 { width: 75px; }
.t3 { width: 68px; }
.t4 { width: 86px; }
.t5 { width: 48px; }
.t6 { width: 79px; }
.t7 { width: 36px; }
.t8 { width: 80px; }

.panel {
  display: grid;
  grid-template-columns: 462fr 456fr;
  gap: 4px;
  margin-left: 1px;
  padding: 4px 6px 4px 3px;
  border-top: 1px solid var(--soft);
  border-left: 1px solid var(--soft);
}

/* left column */
.left,
.right {
  min-width: 0;
}

.top {
  display: flex;
}

.keys {
  display: flex;
  flex-direction: column;
  gap: 6px;
  margin-right: 5px;
}

.keys .row {
  gap: 2px;
}

.info {
  flex: 1;
  height: 40px;
  padding-left: 2px;
  border: 1px solid var(--soft);
  border-width: 1px 0 0 1px;
  background: #fff;
  overflow: hidden;
  font: 11px/14px var(--open);
  white-space: nowrap;
}

.producer {
  min-height: 152px;
}

.producer .keys {
  padding-top: 7px;
}

.producer .info {
  height: 54px;
  margin-top: 1px;
}

.code-wide {
  width: 121px;
}

.code-mid {
  width: 115px;
}

.code-short {
  width: 73px;
}

.unit label {
  width: 22px;
  padding-left: 2px;
}

.unit .white {
  gap: 4px;
  width: 33px;
}

.permit {
  gap: 2px;
  margin-top: 4px;
}

.permit label:first-child {
  width: 68px;
  padding-left: 4px;
}

.seq {
  width: 46px;
}

.albo {
  width: 155px;
}

.tiny {
  width: 31px;
  background: var(--face);
}

.permit .del {
  margin: 0 7px 0 auto;
}

.receiver {
  min-height: 147px;
  margin-top: 2px;
}

.receiver .keys {
  padding-top: 5px;
}

.receiver .info {
  margin-top: -1px;
}

.receiver .permit {
  margin-top: 6px;
}

.trip {
  height: 23px;
  padding-left: 11px;
}

.trip .pick {
  margin-right: 12px;
}

.carrier .keys {
  padding-top: 8px;
}

.carrier .info {
  margin-top: -3px;
}

.carrier .permit {
  margin: 3px 0 4px;
}

.vehicle {
  display: flex;
  align-items: flex-start;
  margin-top: 6px;
}

.mode {
  flex: 1;
  padding-bottom: 4px;
}

.plates {
  gap: 4px;
  padding: 2px 4px 0 3px;
}

.plates .plate {
  flex: 1;
}

.plates .trailer {
  margin-left: 3px;
}

.driver {
  margin-left: 4px;
  padding: 4px 4px 3px 7px;
}

.surname {
  flex: 137;
}

.name {
  flex: 99;
}

.driver label {
  width: 54px;
}

.driver .second-name {
  width: 50px;
  margin-left: 6px;
}

.start {
  width: 94px;
  margin-left: 1px;
  padding: 0 1px 1px;
}

.start > label {
  display: block;
  height: 22px;
  padding-left: 5px;
}

.start .date {
  width: 90px;
}

.start .row {
  margin-top: 1px;
  justify-content: space-between;
  padding-left: 2px;
}

.hour {
  width: 52px;
}

/* right column */
.right legend {
  margin-left: 0;
}

.waste {
  padding: 0 7px 1px 5px;
}

.lead {
  flex: none;
  width: 36px;
}

.cer {
  gap: 2px;
}

.cer .lead {
  width: 34px;
}

.cer-code {
  width: 98px;
}

.tall {
  width: 24px;
  height: 24px;
}

.physical {
  width: 136px;
}

.descr {
  align-items: flex-start;
  margin-top: 1px;
}

.descr .lead {
  padding-top: 8px;
}

.memos {
  flex: 1;
}

.memo {
  display: flex;
  flex: 1;
  height: 32px;
  border: 1px solid var(--edge);
  background: var(--face);
}

.memo textarea {
  flex: 1;
  height: 100%;
  padding: 2px 0 2px 3px;
  background: #fff;
  resize: none;
  overflow: hidden;
}

.memo textarea[readonly] {
  background: var(--face);
  color: #000;
}

.memo.low {
  height: 24px;
}

.bar {
  width: 14px;
  background: url("data:image/svg+xml,%3Csvg xmlns='http://www.w3.org/2000/svg' width='9' height='6'%3E%3Cpath d='M1 5l3.5-3.5L8 5' fill='none' stroke='%23b8b8b8' stroke-width='2'/%3E%3C/svg%3E") center 4px no-repeat,
    url("data:image/svg+xml,%3Csvg xmlns='http://www.w3.org/2000/svg' width='9' height='6'%3E%3Cpath d='M1 1l3.5 3.5L8 1' fill='none' stroke='%23b8b8b8' stroke-width='2'/%3E%3C/svg%3E") center bottom 4px no-repeat;
}

.low .bar {
  background-position: center 5px, center bottom 1px;
}

.packs {
  margin-top: 1px;
}

.packs .count {
  width: 40px;
}

.packs label:not(.lead) {
  width: 37px;
  margin-left: 8px;
}

.pack {
  width: 144px;
  margin-right: 2px;
}

.hazard {
  margin: 1px -5px 0;
  padding: 7px 1px 4px 2px;
}

.hp {
  display: grid;
  grid-template-columns: repeat(7, 57fr) 48fr;
  row-gap: 6px;
  color: #6d6d6d;
}

.hp label {
  display: flex;
  align-items: center;
  gap: 6px;
}

.hp input {
  border-color: #ccc;
}

.chem {
  margin-top: 3px;
}

.long {
  width: 121px;
}

.origin {
  margin: 3px 0;
  padding-left: 6px;
}

.origin select {
  width: 232px;
}

.dest {
  padding: 0 62px 1px 5px;
}

.dest .row {
  margin-top: -1px;
  gap: 5px;
}

.rec {
  margin: 0 2px;
}

.small {
  width: 55px;
}

.weight {
  position: relative;
  z-index: 1;
  height: 26px;
  padding: 0 4px;
  gap: 3px;
  background: var(--face);
}

.marked {
  height: 29px;
  gap: 2px;
  margin-top: -2px;
  padding-right: 2px;
  border: 2px solid #ed1c24;
}

.marked label {
  width: 76px;
}

.kg {
  width: 80px;
  height: 20px;
}

.weight .btn {
  width: 23px;
  height: 23px;
}

.weight .first {
  margin-left: 34px;
}

.qty {
  margin-top: -2px;
  padding: 3px 5px 4px 7px;
}

.qty legend,
.verified legend {
  margin-left: -3px;
}

.amount {
  width: 90px;
  height: 20px;
}

.qty .unit-label {
  width: 67px;
  margin-left: 43px;
}

.qty select {
  width: 57px;
  margin-right: 19px;
}

.verified {
  margin-top: 1px;
  padding: 0 6px 3px 7px;
}

.verified .row {
  gap: 2px;
}

.verified .arrival {
  margin-bottom: 6px;
}

.arrival label:first-child {
  width: 54px;
}

.arrival .short {
  width: 86px;
}

.arrival .hour {
  height: 20px;
}

.arrival select {
  flex: 0 0 163px;
  margin-left: 26px;
}

.name-col {
  width: 86px;
}

.verified .btn {
  width: 23px;
  height: 23px;
}

.cubic {
  margin-top: 7px;
}

.litres {
  width: 57px;
  height: 20px;
  margin: 0 2px 0 1px;
}

.copy {
  gap: 5px;
  margin-top: 1px;
  padding-left: 8px;
}

.copy .pick {
  margin-right: 8px;
}

.bottom {
  display: flex;
  gap: 7px;
  margin-top: 4px;
}

.route {
  flex: 1;
}

.right .route legend {
  margin-left: 3px;
}

.route .row {
  gap: 3px;
  padding: 2px 2px 1px 0;
}

.route .memo {
  height: 33px;
}

.route .white {
  width: 25px;
}

.adr {
  width: 118px;
  padding: 4px;
}
```
